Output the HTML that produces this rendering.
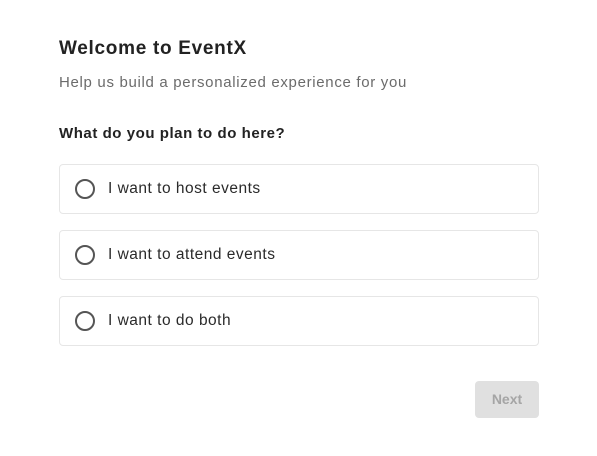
<!DOCTYPE html>
<html><head><style>
body{margin:0;width:597px;height:456px;background:#fff;font-family:"Liberation Sans",sans-serif;position:relative;overflow:hidden}
.a{position:absolute;white-space:nowrap}
.card{position:absolute;left:59px;width:478px;height:48px;border:1px solid #e6e6e6;border-radius:4px;background:#fff}
.card .r{position:absolute;left:15px;top:14px;width:16px;height:16px;border:2px solid #555;border-radius:50%}
.card .t{position:absolute;left:48px;top:15px;font-size:15.5px;color:#2a2a2a;letter-spacing:0.5px}
</style></head><body>
<div class="a" style="left:59px;top:38px;font-size:19px;font-weight:bold;color:#222;letter-spacing:0.7px">Welcome to EventX</div>
<div class="a" style="left:59px;top:74px;font-size:15px;color:#6b6b6b;letter-spacing:0.68px">Help us build a personalized experience for you</div>
<div class="a" style="left:59px;top:125px;font-size:15px;font-weight:bold;color:#222;letter-spacing:0.55px">What do you plan to do here?</div>
<div class="card" style="top:164px"><div class="r"></div><div class="t">I want to host events</div></div>
<div class="card" style="top:230px"><div class="r"></div><div class="t">I want to attend events</div></div>
<div class="card" style="top:296px"><div class="r"></div><div class="t">I want to do both</div></div>
<div class="a" style="left:475px;top:381px;width:64px;height:37px;background:#e0e0e0;border-radius:4px;color:#a5a5a5;font-weight:bold;font-size:14px;text-align:center;line-height:37px">Next</div>
</body></html>
